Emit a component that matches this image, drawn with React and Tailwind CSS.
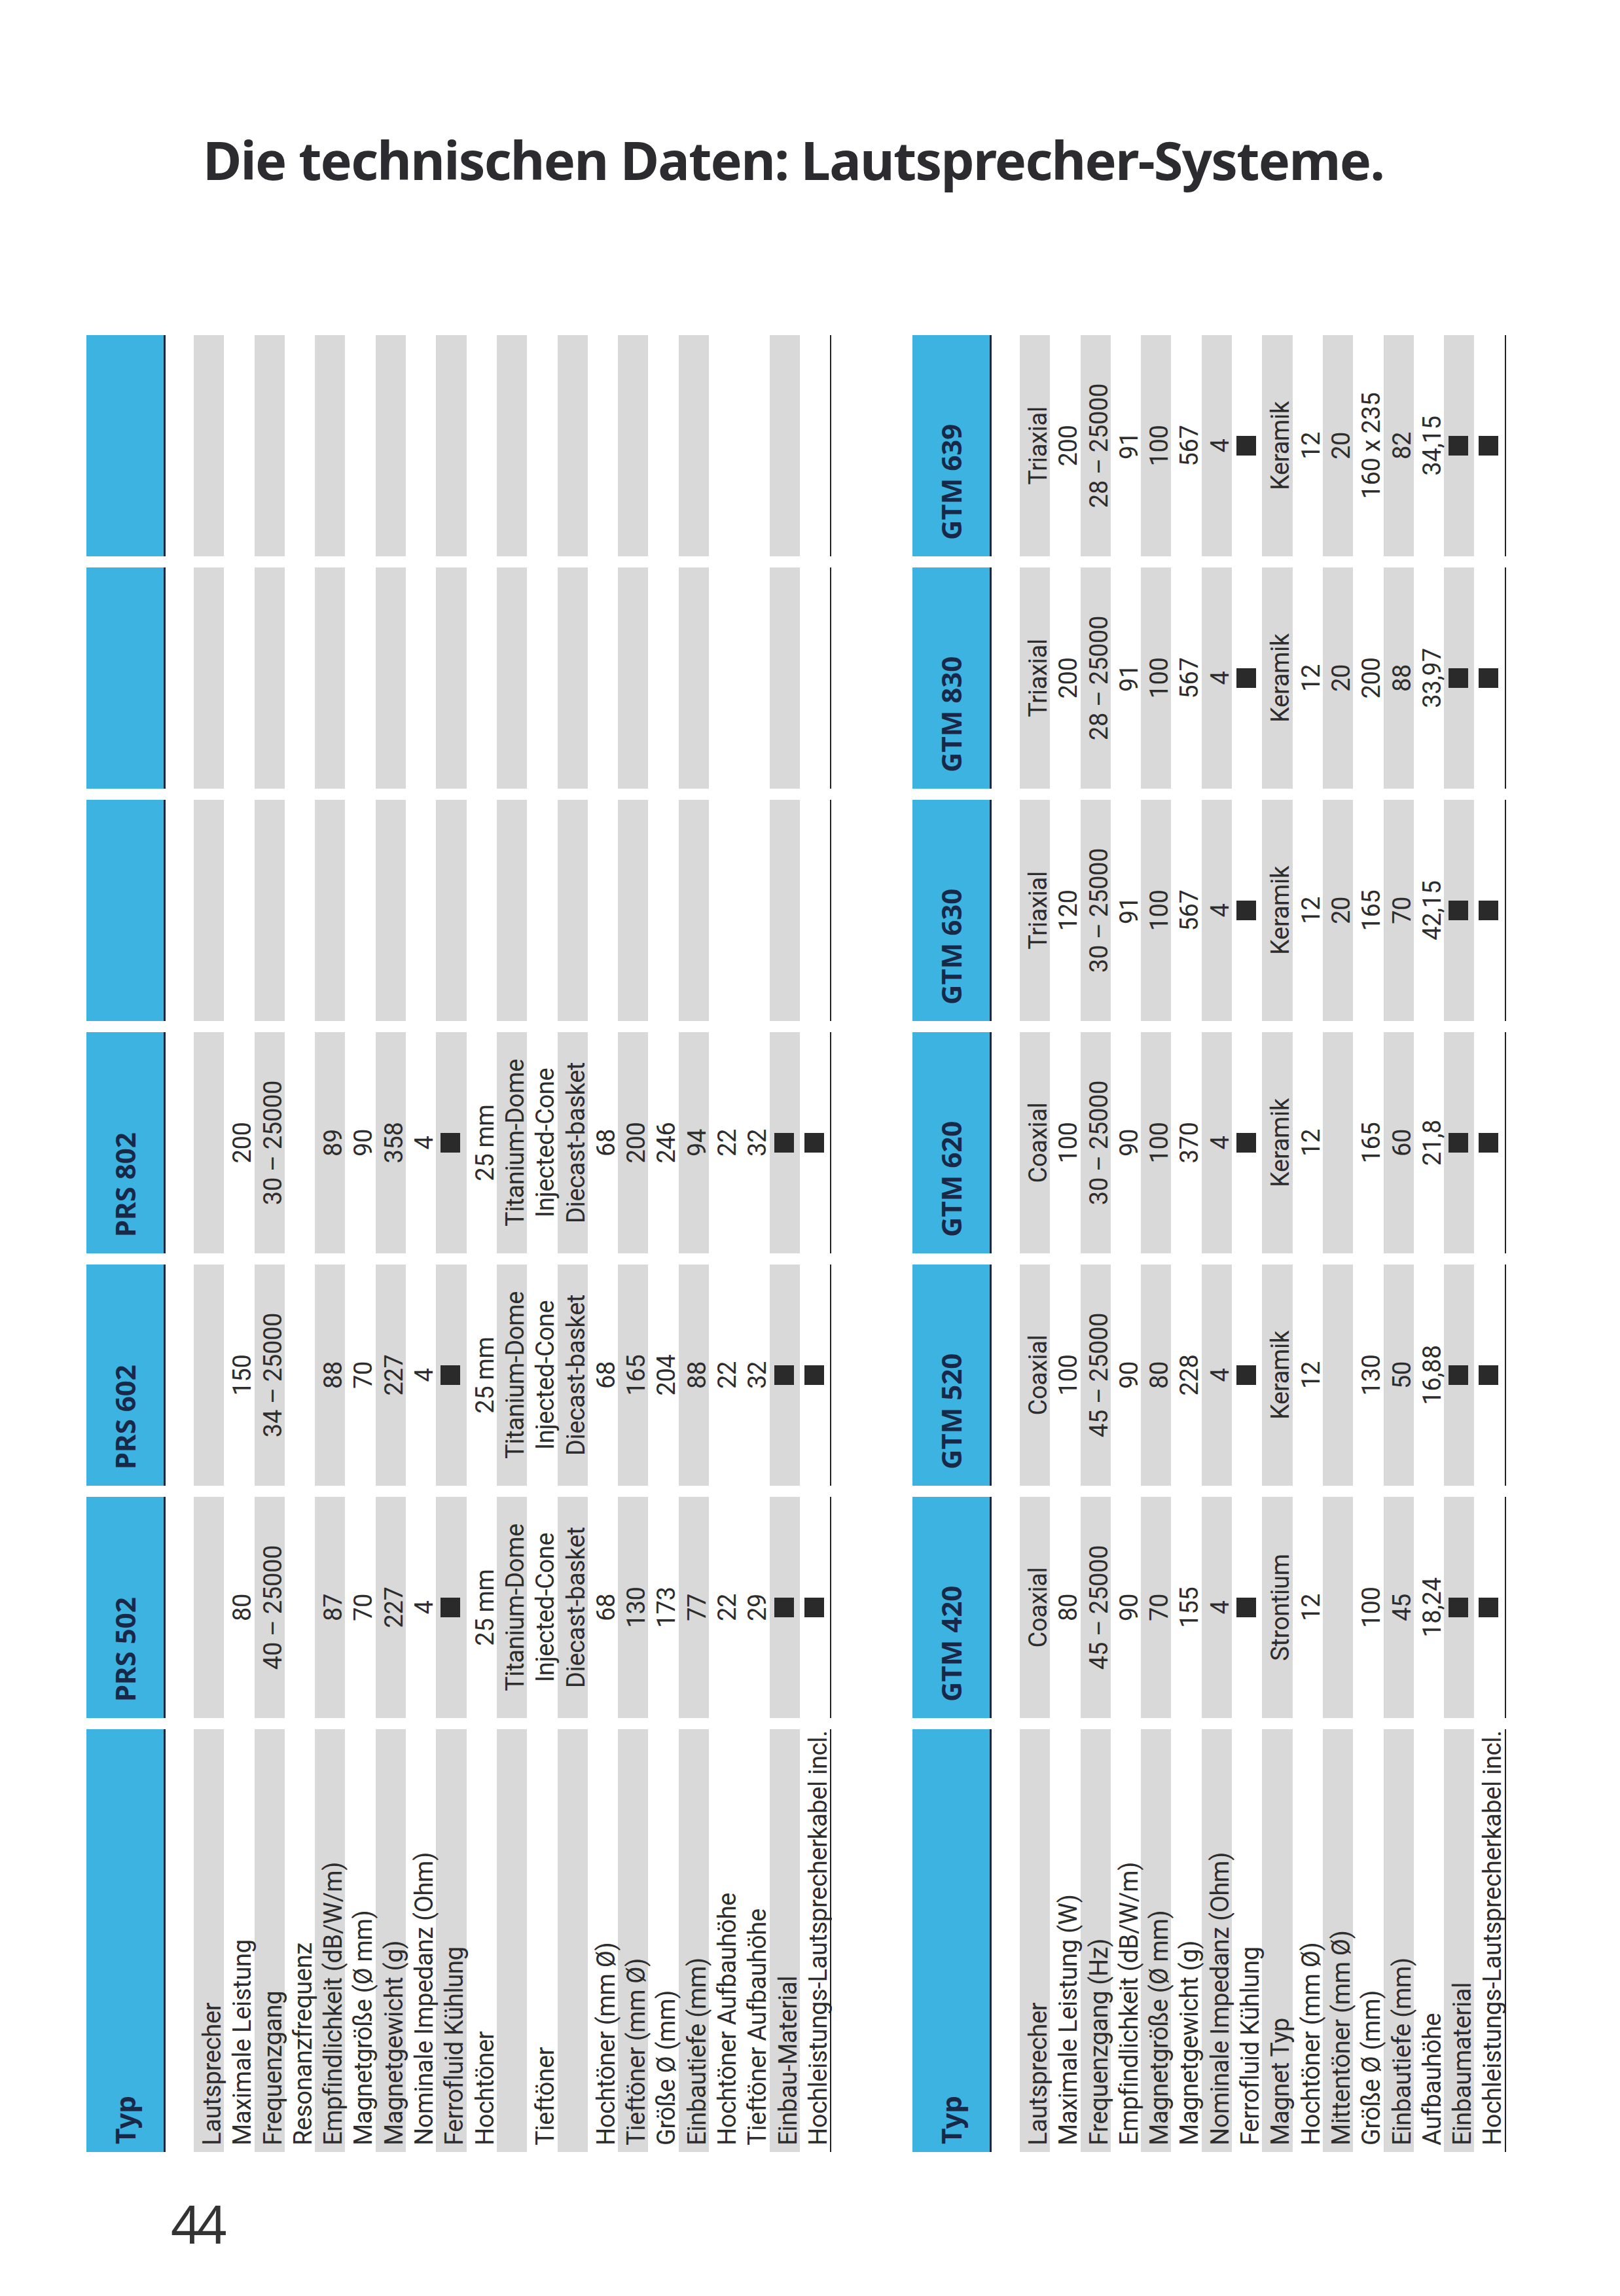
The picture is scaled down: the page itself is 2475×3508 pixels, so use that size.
import React from 'react'

const SQ = '■'

const prsRows = [
  ['Lautsprecher', true],
  ['Maximale Leistung', false],
  ['Frequenzgang', true],
  ['Resonanzfrequenz', false],
  ['Empfindlichkeit (dB/W/m)', true],
  ['Magnetgröße (Ø mm)', false],
  ['Magnetgewicht (g)', true],
  ['Nominale Impedanz (Ohm)', false],
  ['Ferrofluid Kühlung', true],
  ['Hochtöner', false],
  ['', true],
  ['Tieftöner', false],
  ['', true],
  ['Hochtöner (mm Ø)', false],
  ['Tieftöner (mm Ø)', true],
  ['Größe Ø (mm)', false],
  ['Einbautiefe (mm)', true],
  ['Hochtöner Aufbauhöhe', false],
  ['Tieftöner Aufbauhöhe', false],
  ['Einbau-Material', true],
  ['Hochleistungs-Lautsprecherkabel incl.', false],
]

const prsCols = [
  { name: 'PRS 502', values: ['', '80', '40 – 25000', '', '87', '70', '227', '4', SQ, '25 mm', 'Titanium-Dome', 'Injected-Cone', 'Diecast-basket', '68', '130', '173', '77', '22', '29', SQ, SQ] },
  { name: 'PRS 602', values: ['', '150', '34 – 25000', '', '88', '70', '227', '4', SQ, '25 mm', 'Titanium-Dome', 'Injected-Cone', 'Diecast-basket', '68', '165', '204', '88', '22', '32', SQ, SQ] },
  { name: 'PRS 802', values: ['', '200', '30 – 25000', '', '89', '90', '358', '4', SQ, '25 mm', 'Titanium-Dome', 'Injected-Cone', 'Diecast-basket', '68', '200', '246', '94', '22', '32', SQ, SQ] },
  { name: '', values: [] },
  { name: '', values: [] },
  { name: '', values: [] },
]

const gtmRows = [
  ['Lautsprecher', true],
  ['Maximale Leistung (W)', false],
  ['Frequenzgang (Hz)', true],
  ['Empfindlichkeit (dB/W/m)', false],
  ['Magnetgröße (Ø mm)', true],
  ['Magnetgewicht (g)', false],
  ['Nominale Impedanz (Ohm)', true],
  ['Ferrofluid Kühlung', false],
  ['Magnet Typ', true],
  ['Hochtöner (mm Ø)', false],
  ['Mittentöner (mm Ø)', true],
  ['Größe Ø (mm)', false],
  ['Einbautiefe (mm)', true],
  ['Aufbauhöhe', false],
  ['Einbaumaterial', true],
  ['Hochleistungs-Lautsprecherkabel incl.', false],
]

const gtmCols = [
  { name: 'GTM 420', values: ['Coaxial', '80', '45 – 25000', '90', '70', '155', '4', SQ, 'Strontium', '12', '', '100', '45', '18,24', SQ, SQ] },
  { name: 'GTM 520', values: ['Coaxial', '100', '45 – 25000', '90', '80', '228', '4', SQ, 'Keramik', '12', '', '130', '50', '16,88', SQ, SQ] },
  { name: 'GTM 620', values: ['Coaxial', '100', '30 – 25000', '90', '100', '370', '4', SQ, 'Keramik', '12', '', '165', '60', '21,8', SQ, SQ] },
  { name: 'GTM 630', values: ['Triaxial', '120', '30 – 25000', '91', '100', '567', '4', SQ, 'Keramik', '12', '20', '165', '70', '42,15', SQ, SQ] },
  { name: 'GTM 830', values: ['Triaxial', '200', '28 – 25000', '91', '100', '567', '4', SQ, 'Keramik', '12', '20', '200', '88', '33,97', SQ, SQ] },
  { name: 'GTM 639', values: ['Triaxial', '200', '28 – 25000', '91', '100', '567', '4', SQ, 'Keramik', '12', '20', '160 x 235', '82', '34,15', SQ, SQ] },
]

function Header({ children, label }) {
  return (
    <div
      className={`flex h-[121px] items-center border-b-[3px] border-[#1d2842] bg-[#3cb3e0] font-['Noto_Sans',sans-serif] text-[42px] font-bold leading-none tracking-normal text-[#1a2847] ${
        label ? 'pl-[12px]' : 'pl-[25px]'
      }`}
    >
      {children}
    </div>
  )
}

function LabelColumn({ rows }) {
  return (
    <div className="flex w-[646px] shrink-0 flex-col">
      <Header label>Typ</Header>
      <div className="mt-[43px]">
        {rows.map(([text, gray], i) => (
          <div
            key={i}
            className={`h-[46.3px] whitespace-nowrap pl-[10px] pt-[10px] leading-[36px] ${gray ? 'bg-[#d9d9d9]' : ''}`}
          >
            {text}
          </div>
        ))}
      </div>
      <div className="h-[2px] bg-[#222]" />
    </div>
  )
}

function ValueColumn({ name, values, rows }) {
  return (
    <div className="flex w-[338px] shrink-0 flex-col">
      <Header>{name}</Header>
      <div className="mt-[43px]">
        {rows.map(([, gray], i) => {
          const v = values[i] || ''
          return (
            <div key={i} className={`flex h-[46.3px] justify-center ${gray ? 'bg-[#d9d9d9]' : ''}`}>
              {v === SQ ? (
                <span className="mt-[7px] block h-[30px] w-[30px] bg-[#2a2a2a]" />
              ) : (
                <span className="whitespace-nowrap pt-[10px] leading-[36px]">{v}</span>
              )}
            </div>
          )
        })}
      </div>
      <div className="h-[2px] bg-[#222]" />
    </div>
  )
}

// the printed tables are turned a quarter to the left; laid out upright and rotated
function SpecTable({ rows, cols, outer, inner }) {
  return (
    <div className={`h-[2776px] shrink-0 overflow-hidden ${outer}`}>
      <div
        className={`flex w-[2776px] origin-top-left -rotate-90 translate-y-[2776px] gap-[17px] font-['Roboto',sans-serif] text-[38px] font-normal tracking-[-0.3px] text-[#2d2d2d] ${inner}`}
      >
        <LabelColumn rows={rows} />
        {cols.map((c, i) => (
          <ValueColumn key={i} name={c.name} values={c.values} rows={rows} />
        ))}
      </div>
    </div>
  )
}

export default function App() {
  return (
    <div className="h-[3508px] w-[2475px] overflow-hidden bg-white font-['Noto_Sans',sans-serif] text-[#2b2b2b]">
      <h1 className="pl-[310px] pt-[203px] text-[81px] font-bold leading-none tracking-[-1.7px] text-[#2c2c30]">
        Die technischen Daten: Lautsprecher-Systeme.
      </h1>

      <div className="mt-[228px] flex gap-[123px] pl-[132px]">
        <SpecTable rows={prsRows} cols={prsCols} outer="w-[1139px]" inner="h-[1139px]" />
        <SpecTable rows={gtmRows} cols={gtmCols} outer="w-[907px]" inner="h-[907px]" />
      </div>

      <div className="mt-[69px] pl-[261px] text-[80px] leading-none tracking-[-6px] text-[#333]">
        44
      </div>
    </div>
  )
}
